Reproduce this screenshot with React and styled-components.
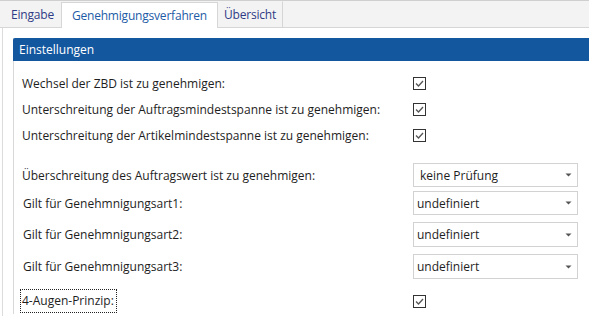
import React from 'react';
import styled, { createGlobalStyle } from 'styled-components';

const GlobalStyle = createGlobalStyle`
  body {
    margin: 0;
    background: #fff;
    font-family: 'Open Sans', 'Noto Sans', sans-serif;
    color: #1e1e1e;
  }
`;

const Page = styled.div`
  width: 589px;
  height: 316px;
  overflow: hidden;
  display: flex;
  flex-direction: column;
`;

const TabBar = styled.div`
  display: flex;
  height: 26px;
  background: #f3f3f3;
  border-top: 1px solid #cfcfcf;
  border-bottom: 1px solid #d6d6d6;
`;

const Tab = styled.div`
  display: flex;
  align-items: center;
  box-sizing: border-box;
  padding: 0 ${({ $pr }) => $pr}px 0 ${({ $pl }) => $pl}px;
  margin-top: ${({ $active }) => ($active ? 1 : 0)}px;
  margin-bottom: ${({ $active }) => ($active ? -1 : 0)}px;
  background: ${({ $active }) => ($active ? '#fff' : 'transparent')};
  border-left: 1px solid ${({ $active }) => ($active ? '#d6d6d6' : 'transparent')};
  border-right: 1px solid ${({ $active, $edge }) => ($active || $edge ? '#d6d6d6' : 'transparent')};
  border-top: 1px solid ${({ $active }) => ($active ? '#d6d6d6' : 'transparent')};
  font-size: 12px;
  letter-spacing: -0.2px;
  color: ${({ $active }) => ($active ? '#1d5ba6' : '#2f3b86')};
`;

const Content = styled.div`
  flex: 1;
  margin-left: 2px;
  border-left: 1px solid #dcdcdc;
  padding: 10px 0 0 10px;
`;

const Panel = styled.div`
  border-left: 1px solid #d8d8d8;
`;

const Header = styled.div`
  height: 23px;
  background: #13579f;
  color: #fff;
  font-size: 12px;
  display: flex;
  align-items: center;
  padding-left: 6px;
  border-top-left-radius: 2px;
  margin-left: -1px;
`;

const Body = styled.div`
  padding: 9px 0 0 8px;
  display: flex;
  flex-direction: column;
`;

const Row = styled.div`
  display: flex;
  align-items: center;
  height: ${({ $h }) => $h}px;
  margin-top: ${({ $mt }) => $mt || 0}px;
`;

const Label = styled.div`
  width: 391px;
  flex: none;
  font-size: 12px;
  color: #1e1e1e;
  padding-left: ${({ $pl }) => $pl || 0}px;
  box-sizing: border-box;
`;

const FocusLabel = styled.span`
  display: inline-block;
  margin-left: -2px;
  padding: 2px 2px 3px 1px;
  border: 1px dotted #222;
`;

const Box = styled.div`
  width: 11px;
  height: 11px;
  border: 1px solid #333;
  display: flex;
  align-items: center;
  justify-content: center;
  background: #fff;
`;

const Select = styled.div`
  width: 165px;
  height: ${({ $h }) => $h}px;
  box-sizing: border-box;
  border: 1px solid #d2d2d2;
  display: flex;
  align-items: center;
  justify-content: space-between;
  padding: 0 5px 0 ${({ $pl }) => $pl}px;
  font-size: 12px;
  color: #1e1e1e;
`;

const Check = () => (
  <Box>
    <svg width="11" height="11" viewBox="0 0 11 11">
      <polyline points="2,5.5 4.5,8 9,3" fill="none" stroke="#555" strokeWidth="1.3" />
    </svg>
  </Box>
);

const Arrow = () => (
  <svg width="7" height="4" viewBox="0 0 7 4">
    <polygon points="0.5,0.5 6.5,0.5 3.5,3.5" fill="#555" />
  </svg>
);

const checks = [
  'Wechsel der ZBD ist zu genehmigen:',
  'Unterschreitung der Auftragsmindestspanne ist zu genehmigen:',
  'Unterschreitung der Artikelmindestspanne ist zu genehmigen:',
];

const selects = [
  { label: 'Überschreitung des Auftragswert ist zu genehmigen:', value: 'keine Prüfung', mt: 15, h: 24, pl: 6, pad: 0 },
  { label: 'Gilt für Genehmnigungsart1:', value: 'undefiniert', mt: 4, h: 24, pl: 3, pad: 1 },
  { label: 'Gilt für Genehmnigungsart2:', value: 'undefiniert', mt: 7, h: 25, pl: 3, pad: 1 },
  { label: 'Gilt für Genehmnigungsart3:', value: 'undefiniert', mt: 7, h: 25, pl: 3, pad: 1 },
];

export default function App() {
  return (
    <Page>
      <GlobalStyle />
      <TabBar>
        <Tab $pl={10} $pr={6}>Eingabe</Tab>
        <Tab $pl={10} $pr={10} $active>Genehmigungsverfahren</Tab>
        <Tab $pl={5} $pr={6} $edge>Übersicht</Tab>
      </TabBar>
      <Content>
        <Panel>
          <Header>Einstellungen</Header>
          <Body>
            {checks.map((c) => (
              <Row key={c} $h={26}>
                <Label>{c}</Label>
                <Check />
              </Row>
            ))}
            {selects.map((s, i) => (
              <Row key={i} $h={s.h} $mt={s.mt}>
                <Label $pl={s.pad}>{s.label}</Label>
                <Select $h={s.h} $pl={s.pl}>
                  {s.value}
                  <Arrow />
                </Select>
              </Row>
            ))}
            <Row $h={26} $mt={9}>
              <Label>
                <FocusLabel>4-Augen-Prinzip:</FocusLabel>
              </Label>
              <Check />
            </Row>
          </Body>
        </Panel>
      </Content>
    </Page>
  );
}
